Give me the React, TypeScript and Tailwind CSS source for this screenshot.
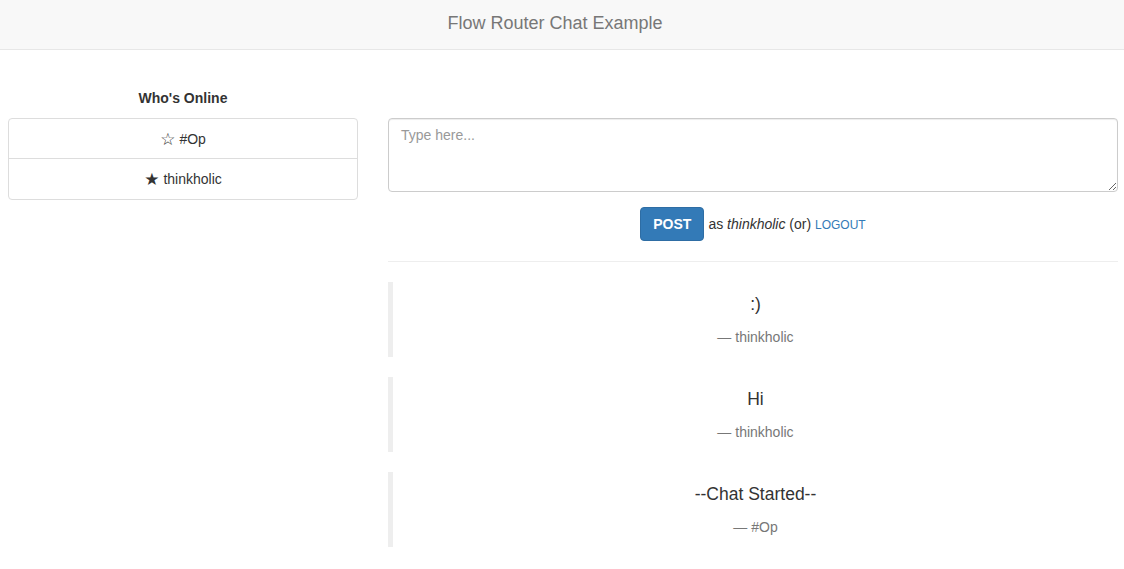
import React from "react";

const messages = [
  { text: ":)", author: "thinkholic" },
  { text: "Hi", author: "thinkholic" },
  { text: "--Chat Started--", author: "#Op" },
];

export default function App() {
  return (
    <div
      className="min-h-[569px] bg-white text-[14px] leading-[20px] text-[#333]"
      style={{ fontFamily: '"Liberation Sans", Arial, sans-serif' }}
    >
      <div className="h-[50px] border-b border-[#e7e7e7] bg-[#f8f8f8] flex items-center justify-center pr-[14px] pb-[4px]">
        <span className="text-[18px] leading-[20px] text-[#777]">Flow Router Chat Example</span>
      </div>
      <div className="flex pl-[8px] gap-[30px]">
        <div className="w-[350px] pt-[38px]">
          <div className="text-center font-bold mb-[10px]">Who's Online</div>
          <div className="border border-[#ddd] rounded-[4px]">
            <div className="h-[40px] flex items-center justify-center border-b border-[#ddd]">
              <span className="mr-[4px] text-[17px] leading-[20px]" style={{ fontFamily: '"DejaVu Sans", sans-serif' }}>☆</span>
              #Op
            </div>
            <div className="h-[40px] flex items-center justify-center">
              <span className="mr-[4px] text-[17px] leading-[20px]" style={{ fontFamily: '"DejaVu Sans", sans-serif' }}>★</span>
              thinkholic
            </div>
          </div>
        </div>
        <div className="w-[730px] pt-[68px]">
          <textarea
            className="block w-full h-[74px] border border-[#ccc] rounded-[4px] px-[12px] py-[6px] text-[14px] leading-[20px] placeholder:text-[#999] outline-none shadow-[inset_0_1px_1px_rgba(0,0,0,0.075)]"
            placeholder="Type here..."
          />
          <div className="mt-[15px] flex items-center justify-center">
            <button className="h-[34px] px-[12px] rounded-[4px] bg-[#337ab7] border border-[#2e6da4] text-white font-bold text-[14px]">
              POST
            </button>
            <span className="ml-[4px]">
              as <em>thinkholic</em> (or){" "}
              <span className="text-[12px] text-[#337ab7]">LOGOUT</span>
            </span>
          </div>
          <div className="mt-[20px] mb-[20px] border-t border-[#eee]" />
          <div className="flex flex-col gap-[20px]">
            {messages.map((m, i) => (
              <div key={i} className="border-l-[5px] border-[#eee] px-[20px] py-[10px] text-center">
                <div className="text-[17.5px] leading-[25px] mb-[10px]">{m.text}</div>
                <div className="text-[14px] leading-[20px] text-[#777]">— {m.author}</div>
              </div>
            ))}
          </div>
        </div>
      </div>
    </div>
  );
}
